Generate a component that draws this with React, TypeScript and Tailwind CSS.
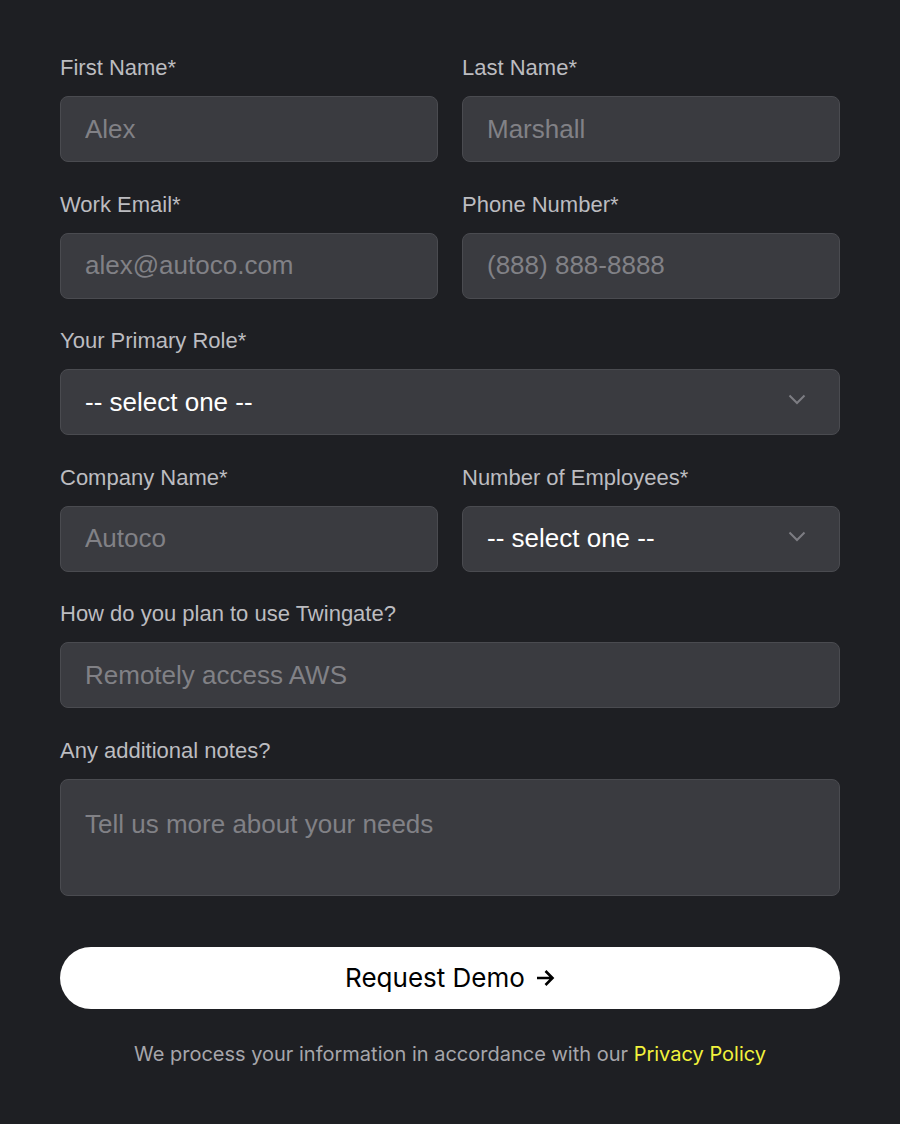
import React from 'react';

const labelCls = 'text-[22px] leading-6 text-[#bcbcc0]';
const fieldCls =
  'w-full h-[66px] rounded-lg border border-[#4a4b50] bg-[#3a3b40] px-6 text-[26px] text-white placeholder:text-[#818186] outline-none';

function Field({ label, placeholder }: { label: string; placeholder: string }) {
  return (
    <label className="flex flex-col gap-4">
      <span className={labelCls}>{label}</span>
      <input className={fieldCls} placeholder={placeholder} />
    </label>
  );
}

function SelectField({ label }: { label: string }) {
  return (
    <label className="flex flex-col gap-4">
      <span className={labelCls}>{label}</span>
      <div className="relative">
        <select className={`${fieldCls} appearance-none`} defaultValue="">
          <option value="">-- select one --</option>
        </select>
        <svg
          className="absolute right-[34px] top-[25px] pointer-events-none"
          width="18"
          height="11"
          viewBox="0 0 18 11"
          fill="none"
        >
          <path d="M1.5 1.5 9 9l7.5-7.5" stroke="#7d7d83" strokeWidth="2" />
        </svg>
      </div>
    </label>
  );
}

export default function App() {
  return (
    <div
      className="min-h-[1124px] bg-[#1e1f23] px-[60px] pt-14"
      style={{ fontFamily: '"Liberation Sans", Arial, sans-serif' }}
    >
      <form className="flex flex-col gap-[30.5px]">
        <div className="grid grid-cols-2 gap-6">
          <Field label="First Name*" placeholder="Alex" />
          <Field label="Last Name*" placeholder="Marshall" />
        </div>
        <div className="grid grid-cols-2 gap-6">
          <Field label="Work Email*" placeholder="alex@autoco.com" />
          <Field label="Phone Number*" placeholder="(888) 888-8888" />
        </div>
        <SelectField label="Your Primary Role*" />
        <div className="grid grid-cols-2 gap-6">
          <Field label="Company Name*" placeholder="Autoco" />
          <SelectField label="Number of Employees*" />
        </div>
        <Field label="How do you plan to use Twingate?" placeholder="Remotely access AWS" />
        <label className="flex flex-col gap-4">
          <span className={labelCls}>Any additional notes?</span>
          <textarea
            className="w-full h-[117px] resize-none rounded-lg border border-[#4a4b50] bg-[#3a3b40] px-6 pt-[28px] text-[26px] leading-8 text-white placeholder:text-[#818186] outline-none"
            placeholder="Tell us more about your needs"
          />
        </label>
      </form>

      <button
        type="button"
        className="mt-[51px] flex h-[62px] w-full items-center justify-center gap-[10px] rounded-full bg-white text-[26px] text-black"
        style={{ fontFamily: 'Inter, sans-serif' }}
      >
        Request Demo
        <svg width="20" height="20" viewBox="0 0 20 20" fill="none">
          <path d="M2 10h15M10.5 3 17.5 10 10.5 17" stroke="#000" strokeWidth="2.6" />
        </svg>
      </button>

      <p
        className="mt-[33px] text-center text-[20px] leading-6 text-[#a6a6ab]"
        style={{ fontFamily: 'Inter, sans-serif' }}
      >
        We process your information in accordance with our{' '}
        <a className="text-[#f2f23c]">Privacy Policy</a>
      </p>
    </div>
  );
}
